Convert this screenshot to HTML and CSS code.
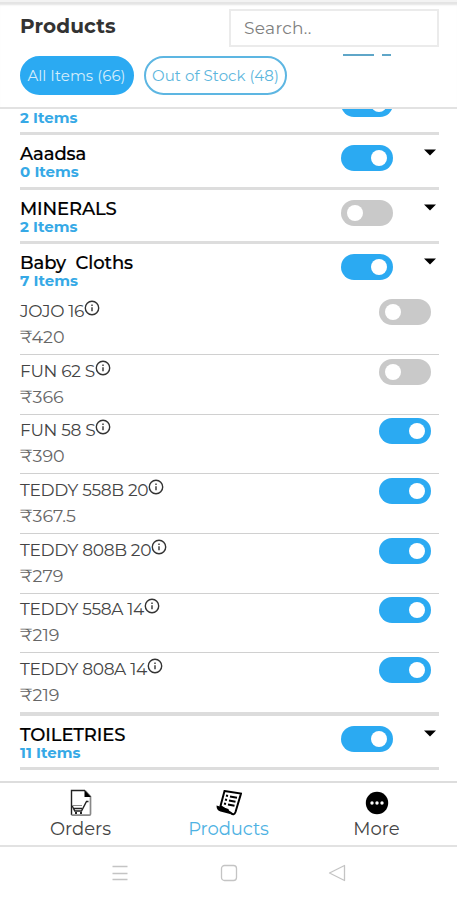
FILE: index.html
```html
<!DOCTYPE html>
<html lang="en">
<head>
<meta charset="utf-8">
<title>Products</title>
<link rel="stylesheet" href="styles.css">
</head>
<body>
<svg class="defs" width="0" height="0">
  <symbol id="info" viewBox="0 0 16 16"><circle cx="8" cy="8" r="6.7" fill="none" stroke="#333" stroke-width="1.4"/><path d="M8 7.2v4M8 4.6v1.3" stroke="#333" stroke-width="1.4"/></symbol>
  <symbol id="caret" viewBox="0 0 12 7"><path d="M0 .5h12L6 6.6z" fill="#000"/></symbol>
</svg>
<header class="header">
  <div class="title-row">
    <h1>Products</h1>
    <input class="search" placeholder="Search..">
  </div>
  <div class="filters">
    <button class="chip active">All Items (66)</button>
    <button class="chip">Out of Stock (48)</button>
    <i class="scrap"></i>
  </div>
</header>
<main class="list">
  <section class="cat clipped"><div class="names"><p class="count">2 Items</p></div><i class="toggle on"></i></section>
  <section class="cat"><div class="names"><h2>Aaadsa</h2><p class="count">0 Items</p></div><i class="toggle on"></i><svg class="caret"><use href="#caret"/></svg></section>
  <section class="cat"><div class="names"><h2>MINERALS</h2><p class="count">2 Items</p></div><i class="toggle"></i><svg class="caret"><use href="#caret"/></svg></section>
  <section class="cat open"><div class="names"><h2>Baby&nbsp; Cloths</h2><p class="count">7 Items</p></div><i class="toggle on"></i><svg class="caret"><use href="#caret"/></svg></section>
  <ul class="items">
    <li><div><p class="name"><span>JOJO 16</span><svg><use href="#info"/></svg></p><p class="price">₹420</p></div><i class="toggle"></i></li>
    <li><div><p class="name"><span>FUN 62 S</span><svg><use href="#info"/></svg></p><p class="price">₹366</p></div><i class="toggle"></i></li>
    <li><div><p class="name"><span>FUN 58 S</span><svg><use href="#info"/></svg></p><p class="price">₹390</p></div><i class="toggle on"></i></li>
    <li><div><p class="name"><span>TEDDY 558B 20</span><svg><use href="#info"/></svg></p><p class="price">₹367.5</p></div><i class="toggle on"></i></li>
    <li><div><p class="name"><span>TEDDY 808B 20</span><svg><use href="#info"/></svg></p><p class="price">₹279</p></div><i class="toggle on"></i></li>
    <li><div><p class="name"><span>TEDDY 558A 14</span><svg><use href="#info"/></svg></p><p class="price">₹219</p></div><i class="toggle on"></i></li>
    <li><div><p class="name"><span>TEDDY 808A 14</span><svg><use href="#info"/></svg></p><p class="price">₹219</p></div><i class="toggle on"></i></li>
  </ul>
  <section class="cat last"><div class="names"><h2>TOILETRIES</h2><p class="count">11 Items</p></div><i class="toggle on"></i><svg class="caret"><use href="#caret"/></svg></section>
</main>
<nav class="tabs">
  <a><svg viewBox="0 0 26 28"><path d="M3.500 26V1.500H17" fill="none" stroke="#222" stroke-width="1.400"/><path d="M17 1.500l5.500 6V25q0 1.200-1.200 1.200H3.500" fill="none" stroke="#888" stroke-width="1.700"/><path d="M16.500 1l6.500 7h-6.500z" fill="#000"/><path d="M20.500 12.500h-2L13.500 22H6.800L4 16.500M6 19.500h8" fill="none" stroke="#222" stroke-width="1.400"/><path d="M4 16.500h10" stroke="#888"/><path d="M7 24h2M12 24h2" stroke="#222" stroke-width="2"/></svg><span>Orders</span></a>
  <a class="current"><svg viewBox="0 0 26 28"><path d="M8.500 2L25 4.500 19.500 23q-1.500 4-4.500 1L4.500 17z" fill="#fff" stroke="#000" stroke-width="2"/><path d="M.5 16.500l12 3.500q.5 4 3.500 5.500L4.500 22.500q-4-1-4-6z" fill="#000"/><path d="M10 6.500l2 .5M9 10.500l2 .5M8 14.500l2 .5M14 7.500l7 1.300M13 11.500l6.500 1.300M12 15.500l6.500 1.300" stroke="#000" stroke-width="2"/></svg><span>Products</span></a>
  <a><svg viewBox="0 0 26 28"><circle cx="13" cy="14" r="11.200" fill="#000"/><g fill="#fff"><circle cx="8" cy="14" r="1.700"/><circle cx="13" cy="14" r="1.700"/><circle cx="18" cy="14" r="1.700"/></g></svg><span>More</span></a>
</nav>
<footer class="system">
  <svg viewBox="0 0 18 18"><path d="M1.500 2.500h15M1.500 9.500h15M1.500 15.500h15"/></svg>
  <svg viewBox="0 0 18 18"><rect x="1.500" y="1.500" width="15" height="15" rx="3"/></svg>
  <svg viewBox="0 0 18 18"><path d="M16.500 1.500v15L1.500 9z" stroke-linejoin="round"/></svg>
</footer>
</body>
</html>
```
FILE: styles.css
```css
* { box-sizing: border-box; margin: 0; padding: 0; }
body { width: 457px; height: 900px; overflow: hidden; background: #fff; font-family: Montserrat, Inter, sans-serif; color: #333; display: flex; flex-direction: column; }
.defs { position: absolute; }
.header { height: 109px; flex: none; border-top: 2px solid #f3f3f3; border-bottom: 2px solid #e2e2e2; padding: 7px 18px 0 20px; box-shadow: inset 0 4px 2px -1px #e4e4e4; }
.title-row { display: flex; justify-content: space-between; height: 38px; }
h1 { font-size: 20px; font-weight: 700; line-height: 35px; color: #333; letter-spacing: .1px; }
.search { width: 210px; height: 38px; border: 2px solid #ebebeb; padding: 0 13px; font: 17px Montserrat, Inter, sans-serif; letter-spacing: .3px; color: #777; }
.search::placeholder { color: #808080; opacity: 1; }
.filters { display: flex; gap: 10px; margin-top: 9px; }
.chip { height: 39px; width: 143px; border: 2px solid #5db6e2; border-radius: 20px; background: #fff; color: #5cb6dd; font: 15px Montserrat, Inter, sans-serif; letter-spacing: .05px; white-space: nowrap; }
.chip.active { width: 114px; padding-right: 1px; background: #2baaf2; border-color: #2baaf2; color: #d4edfb; }
.scrap { width: 48px; height: 2px; margin: -2px 0 0 46px; background: linear-gradient(90deg, #5fa6c8 31px, #fff 31px 39px, #5fa6c8 39px); }
.list { padding: 0 18px 0 20px; height: 672px; flex: none; overflow: hidden; }
.cat { display: flex; height: 54.500px; border-bottom: 3px solid #ddd; padding-top: 9px; }
.names { width: 321px; }
.cat h2 { font-size: 18px; line-height: 20px; font-weight: 500; color: #000; white-space: nowrap; letter-spacing: -.1px; -webkit-text-stroke: .2px #000; }
.count { font-size: 15px; line-height: 18px; margin-top: -1px; font-weight: 700; color: #36a9e6; white-space: nowrap; }
.toggle { flex: none; width: 52px; height: 26px; margin-top: 1px; border-radius: 13px; background: #c9c9c9; display: flex; padding: 5px 6px; }
.toggle::after { content: ""; width: 16px; height: 16px; border-radius: 50%; background: #fff; }
.toggle.on { background: #2baaf2; justify-content: flex-end; }
.caret { width: 12px; height: 7px; margin: 5px 0 0 31px; }
.clipped { height: 26px; padding: 0; }
.clipped .toggle { margin-top: -18px; }
.clipped .count { margin-top: 0; }
.open { border: 0; height: 51.500px; }
.items { list-style: none; border-bottom: 4px solid #dcdcdc; margin-bottom: -1px; }
.items li { height: 59.650px; display: flex; justify-content: space-between; padding: 3.500px 8px 0 0; border-bottom: 1px solid #d0d0d0; }
.items li:last-child { border: 0; height: 59px; }
.items .toggle { margin-top: 0; }
.last { padding-top: 10px; }
.name { display: flex; font-size: 17px; line-height: 24px; letter-spacing: -.3px; color: #444; white-space: nowrap; }
.name svg { width: 16px; height: 16px; margin: 1px 0 0 0; }
.price { font-size: 17.500px; line-height: 26px; color: #666; margin-top: 1px; }
.tabs { height: 66px; flex: none; border-top: 2px solid #ddd; border-bottom: 2px solid #e2e2e2; display: flex; justify-content: center; }
.tabs a { width: 148px; display: flex; flex-direction: column; align-items: center; padding-top: 6px; font-size: 18px; line-height: 24px; color: #444; }
.tabs svg { width: 26px; height: 28px; }
.tabs .current { color: #4eb2e3; letter-spacing: -.1px; }
.system { flex: 1; display: flex; justify-content: center; gap: 90.500px; padding-top: 17px; }
.system svg { width: 18px; height: 18px; fill: none; stroke: #c4c4c4; stroke-width: 1.300; }
```
